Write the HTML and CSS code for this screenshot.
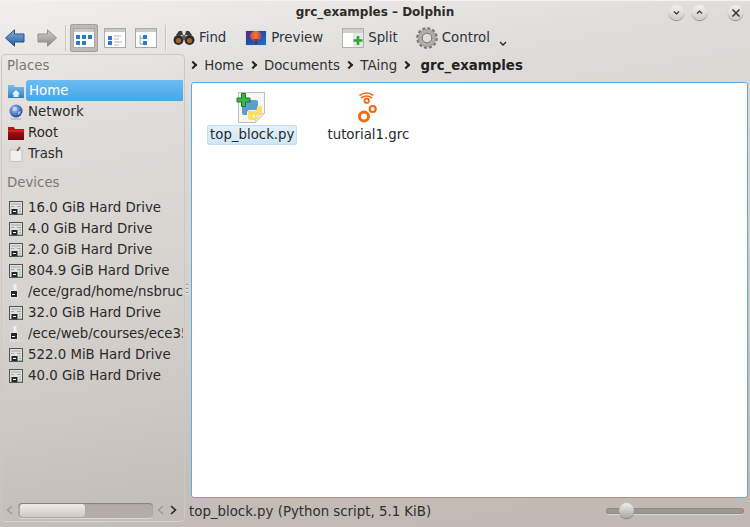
FILE: index.html
```html
<!DOCTYPE html>
<html lang="en">
<head>
  <meta charset="UTF-8">
  <title>grc_examples – Dolphin</title>
  <link rel="stylesheet" href="styles.css">
</head>
<body>
  <svg class="defs" width="0" height="0">
    <defs>
      <linearGradient id="blueArrow" x1="0" y1="0" x2="0" y2="1"><stop offset="0" stop-color="#8db4dc"/><stop offset="1" stop-color="#1f5a9e"/></linearGradient>
      <linearGradient id="greyArrow" x1="0" y1="0" x2="0" y2="1"><stop offset="0" stop-color="#d4d2cf"/><stop offset="1" stop-color="#8b8986"/></linearGradient>
      <linearGradient id="folderBlue" x1="0" y1="0" x2="0" y2="1"><stop offset="0" stop-color="#7cc0ea"/><stop offset="1" stop-color="#2f80bd"/></linearGradient>
      <linearGradient id="folderRed" x1="0" y1="0" x2="0" y2="1"><stop offset="0" stop-color="#c81418"/><stop offset="1" stop-color="#6e0608"/></linearGradient>
      <linearGradient id="sky" x1="0" y1="0" x2="1" y2="1"><stop offset="0" stop-color="#5b2a78"/><stop offset="0.5" stop-color="#1e4fb0"/><stop offset="1" stop-color="#1a7ad0"/></linearGradient>
      <linearGradient id="balloon" x1="0" y1="0" x2="1" y2="0"><stop offset="0" stop-color="#d8404a"/><stop offset="0.5" stop-color="#e8802a"/><stop offset="1" stop-color="#9c2f86"/></linearGradient>
      <radialGradient id="globe" cx="0.4" cy="0.35" r="0.7"><stop offset="0" stop-color="#a5c6f2"/><stop offset="1" stop-color="#1c3f9a"/></radialGradient>
      <symbol id="drive" viewBox="0 0 16 16">
        <rect x="1.500" y="1.500" width="13" height="13" fill="#dfe0de" stroke="#55554f"/>
        <path d="M3 4h10M3 6.500h3M9 6.500h4M11 9h2M11 11.500h2" stroke="#a5a8a5" fill="none"/>
        <rect x="3.500" y="9" width="6" height="5" fill="#23262a"/>
        <path d="M5 11.500h3" stroke="#fff" fill="none"/>
        <path d="M10 14h4" stroke="#39a844" fill="none"/>
      </symbol>
      <symbol id="netdrive" viewBox="0 0 16 16">
        <path d="M7 0v7" stroke="#efeeec" stroke-width="3" fill="none"/>
        <rect x="2.500" y="6.500" width="7" height="7" fill="#23262a" stroke="#e4e3e1"/>
        <path d="M4 10.500h3" stroke="#fff" fill="none"/>
        <path d="M1 15h13" stroke="#e0dedb" fill="none"/>
      </symbol>
    </defs>
  </svg>

  <div class="window">
    <header class="titlebar">
      <span class="title">grc_examples – Dolphin</span>
      <div class="win-btns">
        <span class="win-btn"><svg width="9" height="9" viewBox="0 0 9 9"><path d="M2 3.500l2.500 2.500L7 3.500" fill="none" stroke="#333" stroke-width="1.200"/></svg></span>
        <span class="win-btn"><svg width="9" height="9" viewBox="0 0 9 9"><path d="M2 5.500L4.500 3 7 5.500" fill="none" stroke="#333" stroke-width="1.200"/></svg></span>
        <span class="win-btn close"><svg width="10" height="10" viewBox="0 0 10 10"><path d="M1.500 1.500l7 7M8.500 1.500l-7 7" fill="none" stroke="#333" stroke-width="1.500"/></svg></span>
      </div>
    </header>

    <div class="toolbar">
      <span class="tool nav">
        <svg width="20" height="18" viewBox="0 0 20 18"><path d="M0.500 9L9.500 0.800V5H19V13H9.500V17.200Z" fill="url(#blueArrow)" stroke="#24508a"/></svg>
      </span>
      <span class="tool nav">
        <svg width="20" height="18" viewBox="0 0 20 18"><path d="M19.500 9L10.500 0.800V5H1V13H10.500V17.200Z" fill="url(#greyArrow)" stroke="#918f8c"/></svg>
      </span>
      <span class="sep first"></span>
      <span class="view-btn active">
        <svg width="22" height="20" viewBox="0 0 22 20">
          <rect x="0.500" y="0.500" width="21" height="19" fill="#fff" stroke="#a9a9a7"/>
          <rect x="1" y="1" width="20" height="3" fill="#c9c9c7"/>
          <path d="M3 7h4v4H3zM9 7h4v4H9zM15 7h4v4h-4zM3 13h4v4H3zM9 13h4v4H9z" fill="#2a78d2"/>
        </svg>
      </span>
      <span class="view-btn">
        <svg width="22" height="20" viewBox="0 0 22 20">
          <rect x="0.500" y="0.500" width="21" height="19" fill="#fff" stroke="#a9a9a7"/>
          <rect x="1" y="1" width="20" height="3" fill="#c9c9c7"/>
          <path d="M4 8h4v4H4zM4 13h4v4H4z" fill="#2a78d2"/>
          <path d="M10 8h7M10 11h5M10 14h8M10 17h5" stroke="#b5b5b3" fill="none"/>
        </svg>
      </span>
      <span class="view-btn">
        <svg width="22" height="20" viewBox="0 0 22 20">
          <rect x="0.500" y="0.500" width="21" height="19" fill="#fff" stroke="#a9a9a7"/>
          <rect x="1" y="1" width="20" height="3" fill="#c9c9c7"/>
          <path d="M5 7v9h3M5 10h3" stroke="#a0a0a0" fill="none"/>
          <path d="M8 7h4v4H8zM8 13h4v4H8z" fill="#2a78d2"/>
        </svg>
      </span>
      <span class="sep second"></span>
      <span class="tool find">
        <svg width="22" height="16" viewBox="0 0 22 16">
          <path d="M3 5l3-4h3l1 4h2l1-4h3l3 4z" fill="#3b3b3b"/>
          <circle cx="5.500" cy="10" r="5" fill="#2c2c2c"/>
          <circle cx="16.500" cy="10" r="5" fill="#2c2c2c"/>
          <circle cx="5.500" cy="10.500" r="2.600" fill="#a9642a"/>
          <circle cx="16.500" cy="10.500" r="2.600" fill="#a9642a"/>
          <rect x="9.500" y="5" width="3" height="5" fill="#555"/>
        </svg>
        <span>Find</span>
      </span>
      <span class="tool preview">
        <svg width="22" height="18" viewBox="0 0 22 18">
          <rect x="0.500" y="1.500" width="21" height="15" fill="url(#sky)" stroke="#dcdcdc"/>
          <ellipse cx="11" cy="7" rx="6" ry="5" fill="url(#balloon)"/>
          <path d="M8 10l2 3h2l2-3z" fill="#8a2f5a"/>
          <path d="M10 13h2v2h-2z" fill="#5a3020"/>
        </svg>
        <span>Preview</span>
      </span>
      <span class="tool split">
        <svg width="22" height="20" viewBox="0 0 22 20">
          <rect x="0.500" y="0.500" width="21" height="19" fill="#fff" stroke="#b1b1af"/>
          <rect x="1" y="1" width="20" height="4" fill="#cfcfcd"/>
          <rect x="11" y="5" width="10" height="14" fill="#e6e6e4"/>
          <path d="M16 8v9M11.500 12.500h9" stroke="#2ea33a" stroke-width="2.600" fill="none"/>
        </svg>
        <span>Split</span>
      </span>
      <span class="tool control">
        <svg width="22" height="22" viewBox="0 0 22 22">
          <circle cx="11" cy="11" r="9.600" fill="none" stroke="#77767a" stroke-width="2.400" stroke-dasharray="3 2.030"/>
          <circle cx="11" cy="11" r="7" fill="none" stroke="#aeadab" stroke-width="3.600"/>
          <circle cx="11" cy="11" r="8.800" fill="none" stroke="#8b8a88" stroke-width="0.600"/>
          <circle cx="11" cy="11" r="4.800" fill="#dfdcd9" stroke="#6f6e6e"/>
        </svg>
        <span>Control</span>
      </span>
      <svg class="more" width="8" height="6" viewBox="0 0 8 6"><path d="M1 1l3 3 3-3" fill="none" stroke="#222" stroke-width="1.300"/></svg>
    </div>

    <div class="body">
      <aside class="panel">
        <div class="panel-list">
          <div class="group">Places</div>
          <div class="place selected">
            <svg width="16" height="14" viewBox="0 0 16 14"><path d="M0 1h6l1 2h9v11H0z" fill="url(#folderBlue)"/><path d="M4 10l4-4 4 4h-1.500v3h-5v-3z" fill="#dff0fb"/></svg>
            <span class="label">Home</span>
          </div>
          <div class="place">
            <svg width="16" height="16" viewBox="0 0 16 16"><circle cx="8" cy="7" r="6.500" fill="url(#globe)"/><path d="M5 3q3-1 4 1t-2 3-2-2zM10 8l3-1-1 3-2 1z" fill="#dbe6f7" opacity="0.600"/><path d="M3 15h10" stroke="#b9b9b9" stroke-width="1.500"/></svg>
            <span class="label">Network</span>
          </div>
          <div class="place">
            <svg width="16" height="14" viewBox="0 0 16 14"><path d="M0 1h6l1 2h9v11H0z" fill="url(#folderRed)"/><path d="M0 5h16" stroke="#e23a3a"/></svg>
            <span class="label">Root</span>
          </div>
          <div class="place">
            <svg width="16" height="16" viewBox="0 0 16 16"><path d="M2 4h12v10q0 1.500-2 1.500H4q-2 0-2-1.500z" fill="#f1f0ee" stroke="#c5c3c0"/><path d="M9 5l3-4" stroke="#7a5a30" stroke-width="1.500"/></svg>
            <span class="label">Trash</span>
          </div>
          <div class="group devices">Devices</div>
          <div class="place"><svg width="16" height="16"><use href="#drive"/></svg><span class="label">16.0 GiB Hard Drive</span></div>
          <div class="place"><svg width="16" height="16"><use href="#drive"/></svg><span class="label">4.0 GiB Hard Drive</span></div>
          <div class="place"><svg width="16" height="16"><use href="#drive"/></svg><span class="label">2.0 GiB Hard Drive</span></div>
          <div class="place"><svg width="16" height="16"><use href="#drive"/></svg><span class="label">804.9 GiB Hard Drive</span></div>
          <div class="place"><svg width="16" height="16"><use href="#netdrive"/></svg><span class="label">/ece/grad/home/nsbruce</span></div>
          <div class="place"><svg width="16" height="16"><use href="#drive"/></svg><span class="label">32.0 GiB Hard Drive</span></div>
          <div class="place"><svg width="16" height="16"><use href="#netdrive"/></svg><span class="label">/ece/web/courses/ece355</span></div>
          <div class="place"><svg width="16" height="16"><use href="#drive"/></svg><span class="label">522.0 MiB Hard Drive</span></div>
          <div class="place"><svg width="16" height="16"><use href="#drive"/></svg><span class="label">40.0 GiB Hard Drive</span></div>
        </div>
        <div class="hscroll">
          <svg class="btn-start" width="7" height="10" viewBox="0 0 7 10"><path d="M6 1L1.500 5 6 9" fill="none" stroke="#9d9a97" stroke-width="1.300"/></svg>
          <div class="track"><div class="thumb"></div></div>
          <svg class="btn-prev" width="7" height="10" viewBox="0 0 7 10"><path d="M6 1L1.500 5 6 9" fill="none" stroke="#9d9a97" stroke-width="1.300"/></svg>
          <svg class="btn-next" width="7" height="10" viewBox="0 0 7 10"><path d="M1 1l4.500 4L1 9" fill="none" stroke="#222" stroke-width="1.500"/></svg>
        </div>
      </aside>
      <span class="grip"></span>

      <main class="content">
        <nav class="crumbs">
          <span class="arrow"></span><span>Home</span>
          <span class="arrow"></span><span>Documents</span>
          <span class="arrow"></span><span>TAing</span>
          <span class="arrow"></span><b>grc_examples</b>
        </nav>
        <div class="files">
          <div class="file">
            <svg class="file-icon" width="32" height="32" viewBox="0 0 32 32">
              <path d="M2.500 0.500h26v21l-9 9h-17z" fill="#f7f7f5" stroke="#bdbdbb"/>
              <path d="M19.500 30.500v-9h9" fill="#e4e4e2" stroke="#cfcfcd"/>
              <path d="M8 8h12q2 0 2 2v6q0 2-2 2h-6q-3 0-3 3v2H8q-2 0-2-2v-9q0-2 2-2z" fill="#5a9fd4"/>
              <path d="M12 19h6q3 0 3-3v-2h3q2 0 2 2v6q0 1-2 1h-7v2h5q0 3-3 3h-4q-3 0-3-3z" fill="#ffe05c"/>
              <path d="M5.500 1.500h4v4.500h4.500v4h-4.500v4.500h-4v-4.500H1v-4h4.500z" fill="#39b54a" stroke="#1d7a2c"/>
            </svg>
            <span class="file-name hover">top_block.py</span>
          </div>
          <div class="file">
            <svg class="file-icon" width="32" height="32" viewBox="0 0 32 32">
              <g fill="none" stroke="#f26b12">
                <circle cx="12" cy="24.500" r="4.500" stroke-width="3"/>
                <circle cx="20.700" cy="17" r="3" stroke-width="2.200"/>
                <circle cx="14.700" cy="8.700" r="2.200" stroke-width="1.800"/>
                <path d="M9 6q5.500-4 11 0" stroke-width="1.600"/>
                <path d="M7.500 3.500q7-5 14 0" stroke-width="1.600"/>
              </g>
            </svg>
            <span class="file-name">tutorial1.grc</span>
          </div>
        </div>
        <footer class="statusbar">
          <span class="status-text">top_block.py (Python script, 5.1 KiB)</span>
          <div class="zoom-slider"><span class="zoom-knob"></span></div>
        </footer>
      </main>
    </div>
  </div>
</body>
</html>
```

FILE: styles.css
```css
* {
  box-sizing: border-box;
}
html, body {
  margin: 0;
  height: 100%;
}
body {
  font-family: "DejaVu Sans", sans-serif;
  font-size: 13.33px;
  color: #2a2a2a;
  overflow: hidden;
}
.defs {
  position: absolute;
}
.window {
  display: flex;
  flex-direction: column;
  height: 527px;
  padding-top: 2px;
  border-top: 1px solid #f4f3f1;
  background: linear-gradient(170deg, #f1f0ee 0%, #dedbd8 22%, #d5d1cd 50%, #c2bbb6 85%, #bfb8b3 100%);
}

/* title bar */
.titlebar {
  position: relative;
  flex: none;
  display: flex;
  justify-content: center;
  align-items: center;
  height: 18px;
}
.title {
  font-weight: bold;
  font-size: 12px;
  color: #2c2c2c;
}
.win-btns {
  position: absolute;
  top: 2px;
  right: 7px;
  display: flex;
  gap: 8px;
}
.win-btn {
  display: flex;
  align-items: center;
  justify-content: center;
  width: 15px;
  height: 15px;
  border-radius: 50%;
  background: linear-gradient(#f2f1ef, #cfccc9);
  box-shadow: 0 1px 1px #8c8986;
}
.win-btn.close {
  margin-left: 13px;
}

/* toolbar */
.toolbar {
  flex: none;
  display: flex;
  align-items: center;
  height: 33px;
  padding-left: 5px;
}
.tool {
  display: flex;
  align-items: center;
  gap: 4px;
  color: #2b3440;
}
.tool.nav {
  margin-right: 12px;
}
.sep {
  width: 2px;
  height: 26px;
  background: #c8c5c2;
  border-right: 1px solid #f0efed;
}
.sep.first {
  margin: 0 3px 0 -4px;
}
.sep.second {
  margin: 0 6px 0 2px;
}
.view-btn {
  display: flex;
  align-items: center;
  justify-content: center;
  width: 28px;
  height: 28px;
  margin-right: 3px;
}
.view-btn.active {
  background: #bdbab7;
  border-radius: 3px;
  box-shadow: inset 0 0 0 1px #a3a09d;
}
.find {
  margin-right: 19px;
}
.preview {
  margin-right: 19px;
}
.split {
  margin-right: 18px;
}
.more {
  margin: 13px 0 0 9px;
}

/* body */
.body {
  position: relative;
  flex: 1;
  display: flex;
  min-height: 0;
}
.panel {
  flex: none;
  display: flex;
  flex-direction: column;
  width: 184px;
  margin: 0 0 5px 1px;
  border: 1px solid #cbc8c5;
  border-bottom-color: #d8d5d2;
  border-radius: 5px;
}
.panel-list {
  flex: 1;
  overflow: hidden;
  padding-top: 1px;
}
.group {
  height: 24px;
  padding-left: 5px;
  line-height: 20px;
  color: #7d7874;
}
.group.devices {
  height: 25px;
  margin-top: 8px;
  line-height: 21px;
}
.place {
  display: flex;
  align-items: center;
  height: 21px;
  padding: 0 1px 0 6px;
  white-space: nowrap;
  overflow: hidden;
  color: #2a2a2a;
}
.place svg {
  flex: none;
}
.place .label {
  margin-left: 4px;
  overflow: hidden;
}
.place.selected .label {
  flex: 1;
  margin-left: 2px;
  padding-left: 3px;
  line-height: 21px;
  color: #fff;
  background: linear-gradient(#6bbdf2, #47a6e8);
  border-radius: 3px 0 0 3px;
}
.hscroll {
  flex: none;
  display: flex;
  align-items: center;
  height: 22px;
  padding: 0 7px 0 4px;
}
.btn-start {
  margin-right: 5px;
}
.btn-prev {
  margin: 0 6px 0 4px;
}
.track {
  flex: 1;
  height: 15px;
  padding: 1px 2px;
  background: #b3aca7;
  border-radius: 4px;
  box-shadow: inset 0 1px 1px #85807c, 0 1px 0 #dad7d4;
}
.thumb {
  width: 65px;
  height: 13px;
  border-radius: 3px;
  background: linear-gradient(#eeede9, #cdcac4);
  box-shadow: 0 0 1px #8d8985;
}
/* the splitter's handle sits on the gap beside the panel */
.grip {
  position: absolute;
  top: 230px;
  left: 186px;
  width: 2px;
  height: 10px;
  background: repeating-linear-gradient(#8f8a86 0 1px, #ece9e7 1px 2px, transparent 2px 4px);
}

/* content */
.content {
  flex: 1;
  display: flex;
  flex-direction: column;
  min-width: 0;
  padding-left: 4px;
}
.crumbs {
  flex: none;
  display: flex;
  align-items: center;
  height: 28px;
  gap: 6.2px;
  padding: 0 0 6px 1px;
  color: #2f3338;
}
.crumbs b {
  margin-left: 3px;
  color: #222;
}
.arrow {
  width: 6px;
  height: 6px;
  margin-right: 2px;
  border-top: 2px solid #222;
  border-right: 2px solid #222;
  transform: rotate(45deg);
}
.files {
  flex: 1;
  display: flex;
  align-items: flex-start;
  gap: 27px;
  margin: 0 2px 0 2px;
  padding: 9px 0 0 15px;
  background: #fff;
  border: 1px solid #55ade6;
  border-radius: 3px;
}
.file {
  display: flex;
  flex-direction: column;
  align-items: center;
}
.file-name {
  margin-top: 1px;
  padding: 2px 3px;
  border-radius: 3px;
  line-height: 16px;
}
.file-name.hover {
  background: linear-gradient(#e3f1fb, #cfe6f7);
  box-shadow: inset 0 0 0 1px #c4dff3;
}
.statusbar {
  flex: none;
  display: flex;
  align-items: center;
  justify-content: space-between;
  height: 29px;
  padding: 0 6px 3px 0;
  color: #2f2f2f;
}
.zoom-slider {
  position: relative;
  width: 138px;
  height: 6px;
  border-radius: 3px;
  background: #9d9792;
  box-shadow: inset 0 0 0 1px #918b87, 0 1px 0 #dad7d4;
}
.zoom-knob {
  position: absolute;
  top: -5px;
  left: 13px;
  width: 15px;
  height: 15px;
  border-radius: 50%;
  background: linear-gradient(#f0efed, #aaa6a2);
  box-shadow: 0 1px 1px #7f7b77;
}
```
